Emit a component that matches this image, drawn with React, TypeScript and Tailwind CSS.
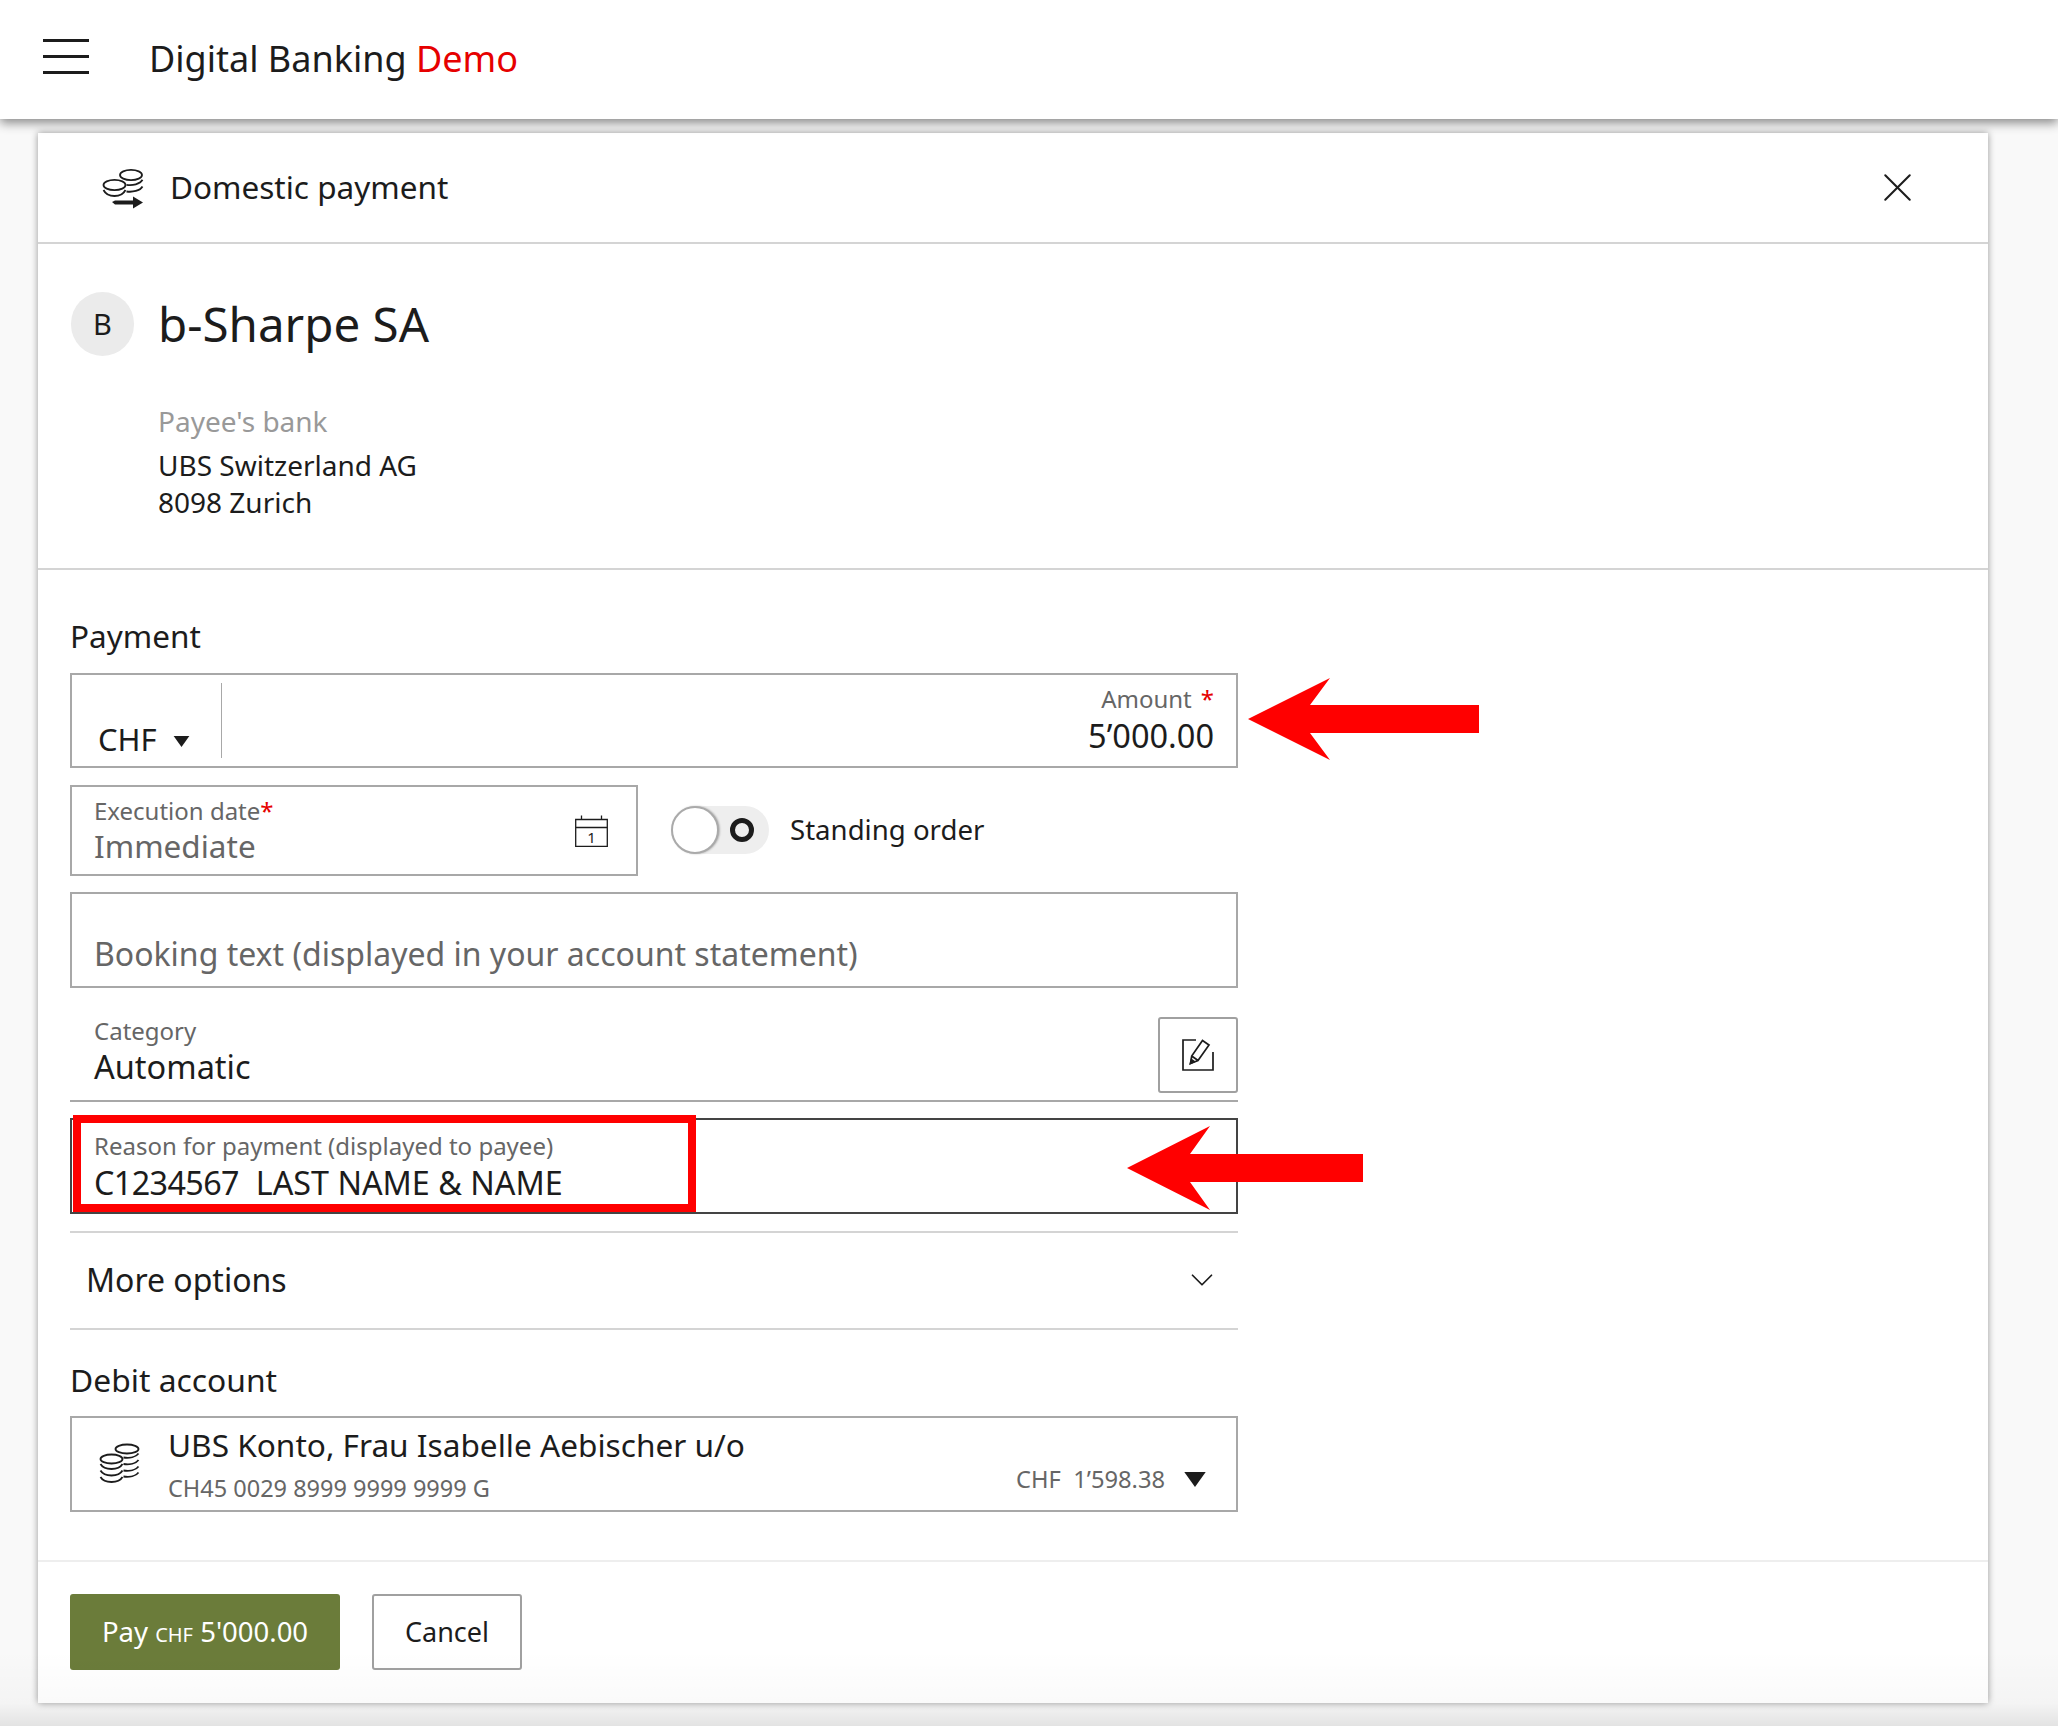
import { X, ChevronDown } from 'lucide-react';

const Triangle = ({ className }: { className: string }) => (
  <svg viewBox="0 0 10 7" className={className}>
    <path d="M0 0h10L5 7z" fill="#1c1c1c" />
  </svg>
);

const TransferCoins = () => (
  <svg viewBox="0 0 44 42" className="w-[44px] h-[42px]" fill="none" stroke="#1c1c1c" strokeWidth="1.8">
    <ellipse cx="30" cy="8" rx="11" ry="5.2" />
    <ellipse cx="13.5" cy="18" rx="11" ry="5.2" />
    <path d="M2.5 23c2 4 6 6 11 6s9-2 11-6" />
    <path d="M25.500 17.800c6 .8 13.500-.5 16-5" />
    <path d="M25.500 24.500c6 .8 13.500-.5 16-5" />
    <path d="M11 35l3-1.500h18V29.500l10 6-10 6v-4H14z" fill="#1c1c1c" stroke="none" />
  </svg>
);

const CoinStack = () => (
  <svg viewBox="0 0 42 42" className="w-[42px] h-[42px]" fill="none" stroke="#1c1c1c" strokeWidth="1.8">
    <ellipse cx="28" cy="6" rx="11.500" ry="4.500" />
    <ellipse cx="12.500" cy="16" rx="11" ry="4.500" />
    <path d="M1.500 21c2 3.500 6 5 11 5s9-1.500 11-5" />
    <path d="M1.500 27.500c2 3.500 6 5 11 5s9-1.500 11-5" />
    <path d="M1.500 34c2 3.500 6 5 11 5s9-1.500 11-5" />
    <path d="M24.500 14.500c6 .8 12.500-.5 15-4" />
    <path d="M24.500 21c6 .8 12.500-.5 15-4" />
    <path d="M24.500 27.500c6 .8 12.500-.5 15-4" />
    <path d="M24.500 33.500c6 .8 12.500-.5 15-4" />
  </svg>
);

const CalendarOne = () => (
  <svg viewBox="0 0 33 32" className="w-[33px] h-[32px]" fill="none" stroke="#1c1c1c" strokeWidth="1.300">
    <path d="M.700 4.500h31.600v27H.700zM.700 12.500h31.600M6.500 4.500V.500M26.500 4.500V.500" />
    <text x="16.500" y="28" textAnchor="middle" fontSize="15" fill="#1c1c1c" stroke="none" fontFamily="'Noto Sans', sans-serif">1</text>
  </svg>
);

const EditIcon = () => (
  <svg viewBox="0 0 32 32" className="w-[32px] h-[32px]" fill="none" stroke="#1c1c1c" strokeWidth="1.700">
    <path d="M14 1H1v30h30V13" />
    <path d="M8.500 24.500l1.200-7.500L20.500 1.500l6.500 4.500-11 15.500zM9.700 17l6.300 4.500" />
    <path d="M8.500 24.500l1-3.800 2.800 1.900z" fill="#1c1c1c" />
  </svg>
);

const Asterisk = () => <span className="text-[#e60000]">*</span>;

export default function App() {
  return (
    <div className="relative h-[1726px] overflow-hidden bg-[#f9f9f9] text-[#1c1c1c] font-['Noto_Sans',sans-serif]">
      {/* Top bar */}
      <header className="relative z-10 flex h-[119px] items-center bg-white pl-[43px] shadow-[0_4px_10px_rgba(0,0,0,0.45)]">
        <div className="flex w-[46px] flex-col gap-[13px] pb-[7px]">
          <span className="h-[3px] bg-[#1c1c1c]" />
          <span className="h-[3px] bg-[#1c1c1c]" />
          <span className="h-[3px] bg-[#1c1c1c]" />
        </div>
        <div className="mb-[2px] ml-[60px] text-[36px] leading-none">
          Digital Banking <span className="text-[#e60000]">Demo</span>
        </div>
      </header>

      {/* Payment card */}
      <main className="relative mt-[14px] ml-[38px] h-[1570px] w-[1950px] bg-white shadow-[0_0_7px_rgba(0,0,0,0.4)]">
        <div className="flex h-[111px] items-center justify-between border-b-2 border-[#d4d4d4] pr-[66px] pl-[63px]">
          <div className="flex items-center gap-[25px]">
            <TransferCoins />
            <span className="mb-[2px] text-[31.500px] leading-none">Domestic payment</span>
          </div>
          <X className="h-[49px] w-[49px] text-[#1c1c1c]" strokeWidth={1} />
        </div>

        <div className="h-[326px] border-b-2 border-[#d4d4d4] pt-[48px] pl-[33px]">
          <div className="flex items-center gap-[24px]">
            <div className="flex h-[64px] w-[63px] items-center justify-center rounded-full bg-[#ebebeb] text-[29px]">B</div>
            <div className="text-[47.500px] leading-none">b-Sharpe SA</div>
          </div>
          <div className="mt-[47px] pl-[87px] text-[28px] leading-[37px]">
            <div className="mb-[7px] text-[#999999]">Payee's bank</div>
            <div>UBS Switzerland AG</div>
            <div>8098 Zurich</div>
          </div>
        </div>

        <div className="w-[1200px] pt-[46px] pl-[32px]">
          <div className="h-[40px] text-[31.500px] leading-[40px]">Payment</div>

          <div className="mt-[17px] flex h-[95px] border-2 border-[#a8a8a8] pr-[22px]">
            <div className="flex w-[149px] shrink-0 items-end gap-[16px] pb-[6px] pl-[26px]">
              <span className="text-[31px] leading-[42px]">CHF</span>
              <Triangle className="mb-[13px] h-[11px] w-[17px]" />
            </div>
            <div className="my-[8px] w-px bg-[#a8a8a8]" />
            <div className="flex flex-1 flex-col items-end pt-[7px]">
              <div className="flex gap-[9px] text-[24px] leading-[34px] text-[#666666]">Amount <Asterisk /></div>
              <div className="text-[32.500px] leading-[40px]">5’000.00</div>
            </div>
          </div>

          <div className="mt-[17px] flex items-center">
            <div className="flex h-[91px] w-[568px] items-center justify-between border-2 border-[#a8a8a8] pr-[28px] pl-[22px]">
              <div className="mb-[2px] flex flex-col">
                <div className="text-[24px] leading-[32px] text-[#666666]">Execution date<Asterisk /></div>
                <div className="text-[31.500px] leading-[38px] text-[#666666]">Immediate</div>
              </div>
              <CalendarOne />
            </div>
            <div className="mb-[2px] ml-[33px] flex h-[48px] w-[98px] items-center justify-end rounded-full bg-[#eeeeee] pr-[15px]">
              <span className="h-[24px] w-[24px] rounded-full border-[5px] border-[#1c1c1c]" />
            </div>
            <div className="relative mb-[2px] -ml-[98px] h-[48px] w-[48px] rounded-full border-2 border-[#aaaaaa] bg-white shadow-[1px_0_2px_rgba(0,0,0,0.25)]" />
            <div className="mb-[2px] ml-[71px] text-[27.600px] leading-none">Standing order</div>
          </div>

          <div className="mt-[16px] flex h-[96px] items-end border-2 border-[#a8a8a8] pb-[12px] pl-[22px]">
            <span className="text-[32px] leading-[40px] text-[#666666]">Booking text (displayed in your account statement)</span>
          </div>

          <div className="mt-[29px] flex h-[85px] items-start justify-between border-b-2 border-[#a8a8a8] pl-[24px]">
            <div className="-mt-[2px] flex flex-col">
              <div className="text-[24px] leading-[32px] text-[#666666]">Category</div>
              <div className="mt-[1px] text-[32.500px] leading-[38px]">Automatic</div>
            </div>
            <button className="flex h-[76px] w-[80px] items-center justify-center rounded-[3px] border-2 border-[#a0a0a0]">
              <EditIcon />
            </button>
          </div>

          <div className="mt-[16px] flex h-[96px] flex-col border-2 border-[#444444] pt-[10px] pl-[22px]">
            <div className="text-[24px] leading-[32px] text-[#666666]">Reason for payment (displayed to payee)</div>
            <div className="text-[32.300px] leading-[40px] whitespace-pre"><span className="tracking-[-0.6px]">C1234567</span>  LAST NAME &amp; NAME</div>
          </div>

          <div className="mt-[17px] flex h-[99px] items-center justify-between border-y-2 border-[#d4d4d4] pr-[17px] pb-[2px] pl-[16px]">
            <span className="text-[32px] leading-none">More options</span>
            <ChevronDown className="h-[38px] w-[38px] text-[#1c1c1c]" strokeWidth={1.100} />
          </div>

          <div className="mt-[30px] h-[40px] text-[31.800px] leading-[40px]">Debit account</div>

          <div className="mt-[16px] flex h-[96px] items-center border-2 border-[#a8a8a8] pr-[29px] pl-[27px]">
            <CoinStack />
            <div className="mb-[2px] ml-[27px] flex flex-1 flex-col">
              <div className="text-[31.600px] leading-[42px]">UBS Konto, Frau Isabelle Aebischer u/o</div>
              <div className="mt-[7px] text-[23.500px] leading-[30px] text-[#666666]">CH45 0029 8999 9999 9999 G</div>
            </div>
            <div className="flex items-center gap-[18px] self-end pb-[15px]">
              <span className="text-[23.700px] leading-[32px] whitespace-pre text-[#666666]">CHF  1’598.38</span>
              <Triangle className="h-[15px] w-[24px]" />
            </div>
          </div>
        </div>

        <div className="mt-[48px] flex gap-[32px] border-t-2 border-[#eeeeee] pt-[32px] pl-[32px]">
          <button className="h-[76px] w-[270px] rounded-[3px] bg-[#6b7c3a] text-[27.500px] text-white">
            Pay <span className="text-[20px]">CHF</span> 5'000.00
          </button>
          <button className="h-[76px] w-[150px] rounded-[3px] border-2 border-[#a0a0a0] text-[27px]">Cancel</button>
        </div>
      </main>

      {/* Bottom fade of the window */}
      <div className="pointer-events-none absolute inset-x-0 bottom-0 z-10 h-[76px] bg-gradient-to-t from-black/[0.09] via-black/[0.02] via-30% to-transparent" />

      {/* Annotations on top of the screenshot */}
      <div className="absolute top-[1115px] left-[73px] z-20 h-[97px] w-[623px] border-8 border-[#ff0000]" />
      <svg viewBox="0 0 231 82" className="absolute top-[678px] left-[1248px] z-20 h-[82px] w-[231px]">
        <path d="M0 41L82 0L62 27H231V55H62L82 82z" fill="#ff0000" />
      </svg>
      <svg viewBox="0 0 236 84" className="absolute top-[1126px] left-[1127px] z-20 h-[84px] w-[236px]">
        <path d="M0 42L83 0L63 28H236V56H63L83 84z" fill="#ff0000" />
      </svg>
    </div>
  );
}
